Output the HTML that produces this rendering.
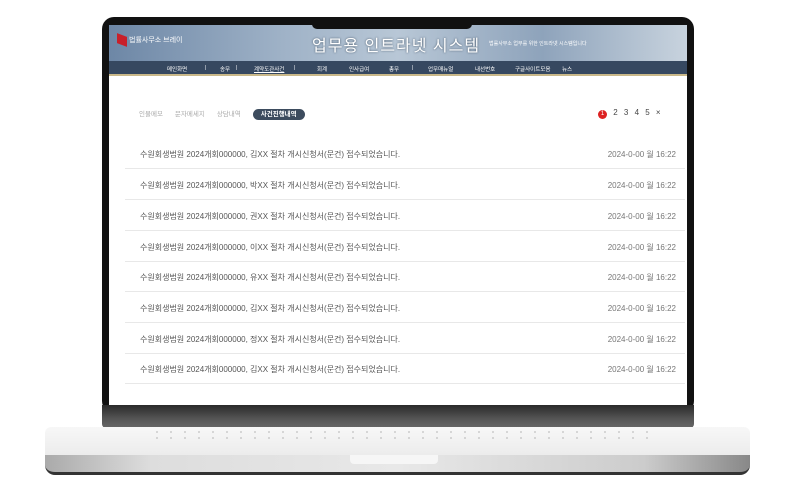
<!DOCTYPE html>
<html><head><meta charset="utf-8"><style>
*{margin:0;padding:0;box-sizing:border-box}
body{width:795px;height:500px;background:#fff;position:relative;overflow:hidden;font-family:"Liberation Sans","Noto Sans CJK KR",sans-serif}
.lid{position:absolute;left:102px;top:17px;width:592px;height:396px;background:#111;border-radius:12px}
.screen{position:absolute;left:109px;top:25px;width:578px;height:380px;background:#fff;overflow:hidden}
.banner{position:absolute;left:0;top:0;width:100%;height:36px;background:linear-gradient(90deg,#6d87a6 0%,#9fb2c7 30%,#b8c7d6 50%,#8ea3bb 75%,#c8d3de 100%)}
.notch{position:absolute;left:312px;top:17px;width:160px;height:12px;background:#111;border-radius:0 0 5px 5px}
.title{position:absolute;left:203px;top:7px;font-size:16px;color:#fff;letter-spacing:1px;text-shadow:0 0 2px #456}
.logo{position:absolute;left:8px;top:10px;font-size:7px;color:#fff}
.logo i{display:inline-block;width:10px;height:10px;background:#c8202a;vertical-align:middle;margin-right:2px;transform:skewY(20deg)}
.sub{position:absolute;left:380px;top:15px;font-size:5px;color:#fff}
.nav{position:absolute;left:0;top:36px;width:100%;height:15px;background:#364860;border-bottom:2px solid #c9b889;font-size:5.5px;color:#fff}
.nav span{position:absolute;top:4px}
.tabs{position:absolute;top:83px;left:30px;font-size:6.5px;color:#aaa}
.tabs span{margin-right:12px}
.tabs b{background:#3d4c5e;color:#fff;border-radius:7px;padding:2px 8px;font-weight:bold}
.pg{position:absolute;top:83px;left:489px;font-size:8px;color:#444;word-spacing:4px}
.pg i{display:inline-block;width:9px;height:9px;border-radius:50%;background:#d22;color:#fff;font-size:6px;text-align:center;line-height:9px;font-style:normal}
.row{position:absolute;left:16px;width:560px;height:31px;border-bottom:1px solid #e8e8e8;font-size:8px;color:#555}
.row .t{position:absolute;left:15px;top:11px}
.row .d{position:absolute;right:9px;top:11px;color:#777}
.chin{position:absolute;left:102px;top:405px;width:592px;height:23px;background:linear-gradient(#2a2a2a,#555 60%,#666);border-radius:0 0 4px 4px}
.base{position:absolute;left:45px;top:427px;width:705px;height:28px;background:linear-gradient(#f7f7f7,#ececec);border-radius:6px 6px 0 0}
.kb{position:absolute;left:150px;top:429px;width:500px;height:12px;background-image:radial-gradient(#999 0.7px,transparent 1.1px);background-size:14px 6px}
.edge{position:absolute;left:45px;top:455px;width:705px;height:20px;background:linear-gradient(90deg,#aaa,#ddd 15%,#e8e8e8 50%,#ccc 85%,#888);border-radius:0 0 10px 10px;border-bottom:3px solid #333}
.notch2{position:absolute;left:350px;top:455px;width:88px;height:9px;background:#f6f6f6;border-radius:0 0 4px 4px}
</style></head><body>
<div class="lid"></div>
<div class="screen">
 <div class="banner"></div>
 <div class="logo"><i></i>법률사무소 브레이</div>
 <div class="title">업무용 인트라넷 시스템</div>
 <div class="sub">법률사무소 업무를 위한 인트라넷 시스템입니다</div>
 <div class="nav">
  <span style="left:58px">메인화면</span><span style="left:96px">|</span><span style="left:111px">송무</span><span style="left:127px">|</span>
  <span style="left:145px;text-decoration:underline">계약도관사건</span><span style="left:185px">|</span><span style="left:208px">회계</span>
  <span style="left:240px">인사급여</span><span style="left:280px">총무</span><span style="left:303px">|</span><span style="left:319px">업무매뉴얼</span>
  <span style="left:366px">내선번호</span><span style="left:406px">구글사이트모음</span><span style="left:453px">뉴스</span>
 </div>
 <div class="tabs"><span>인물메모</span><span>문자메세지</span><span>상담내역</span><b>사건진행내역</b></div>
 <div class="pg"><i>1</i> 2 3 4 5 ×</div>
 <div class="row" style="top:113px"><span class="t">수원회생법원 2024개회000000, 김XX 절차 개시신청서(문건) 접수되었습니다.</span><span class="d">2024-0-00 월 16:22</span></div>
 <div class="row" style="top:144px"><span class="t">수원회생법원 2024개회000000, 박XX 절차 개시신청서(문건) 접수되었습니다.</span><span class="d">2024-0-00 월 16:22</span></div>
 <div class="row" style="top:175px"><span class="t">수원회생법원 2024개회000000, 권XX 절차 개시신청서(문건) 접수되었습니다.</span><span class="d">2024-0-00 월 16:22</span></div>
 <div class="row" style="top:206px"><span class="t">수원회생법원 2024개회000000, 이XX 절차 개시신청서(문건) 접수되었습니다.</span><span class="d">2024-0-00 월 16:22</span></div>
 <div class="row" style="top:236px"><span class="t">수원회생법원 2024개회000000, 유XX 절차 개시신청서(문건) 접수되었습니다.</span><span class="d">2024-0-00 월 16:22</span></div>
 <div class="row" style="top:267px"><span class="t">수원회생법원 2024개회000000, 김XX 절차 개시신청서(문건) 접수되었습니다.</span><span class="d">2024-0-00 월 16:22</span></div>
 <div class="row" style="top:298px"><span class="t">수원회생법원 2024개회000000, 정XX 절차 개시신청서(문건) 접수되었습니다.</span><span class="d">2024-0-00 월 16:22</span></div>
 <div class="row" style="top:328px"><span class="t">수원회생법원 2024개회000000, 김XX 절차 개시신청서(문건) 접수되었습니다.</span><span class="d">2024-0-00 월 16:22</span></div>
</div>
<div class="notch"></div>
<div class="chin"></div>
<div class="base"></div>
<div class="kb"></div>
<div class="edge"></div>
<div class="notch2"></div>
</body></html>
